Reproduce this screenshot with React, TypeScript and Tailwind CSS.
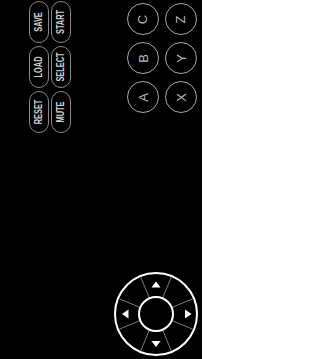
import React from 'react';

const pills = ['SAVE', 'START', 'LOAD', 'SELECT', 'RESET', 'MUTE'];
const keys = ['C', 'Z', 'B', 'Y', 'A', 'X'];

const Pill = ({ label }: { label: string }) => (
  <div className="w-[20px] h-[42px] rounded-full border border-[#8a8a8a] flex items-center justify-center">
    <span className="[transform:rotate(-90deg)_scaleX(0.74)] whitespace-nowrap text-[10px] leading-none font-bold text-[#d2d2d2] font-['Liberation_Sans',sans-serif]">
      {label}
    </span>
  </div>
);

const Key = ({ label }: { label: string }) => (
  <div className="w-[32px] h-[32px] rounded-full border-[1.5px] border-[#a8a8a8] flex items-center justify-center">
    <span className="[transform:rotate(-90deg)] text-[13px] leading-none text-[#b8b8b8] font-['Liberation_Sans',sans-serif]">
      {label}
    </span>
  </div>
);

const DPad = () => {
  const lines = Array.from({ length: 8 }, (_, i) => {
    const a = ((22.5 + 45 * i) * Math.PI) / 180;
    return {
      x1: 43 + 17 * Math.cos(a),
      y1: 43 + 17 * Math.sin(a),
      x2: 43 + 41 * Math.cos(a),
      y2: 43 + 41 * Math.sin(a),
    };
  });
  return (
    <svg width="86" height="86" viewBox="0 0 86 86">
      {lines.map((l, i) => (
        <line key={i} {...l} stroke="#7a7a7a" strokeWidth="1" />
      ))}
      <circle cx="43" cy="43" r="41" fill="none" stroke="#fff" strokeWidth="2" />
      <circle cx="43" cy="43" r="17" fill="none" stroke="#fff" strokeWidth="2" />
      <polygon points="43,10.5 38.5,16.5 47.5,16.5" fill="#fff" />
      <polygon points="43,76 38.5,70 47.5,70" fill="#fff" />
      <polygon points="9,43 15.5,38.5 15.5,47.5" fill="#fff" />
      <polygon points="78.5,43 72,38.5 72,47.5" fill="#fff" />
    </svg>
  );
};

export default function App() {
  return (
    <div className="w-[202px] h-[359px] bg-black flex flex-col justify-between overflow-hidden">
      <div className="flex items-start">
        {/* system buttons */}
        <div className="ml-[29px] mt-[1px] grid grid-cols-2 gap-x-[2px] gap-y-[3px]">
          {pills.map((p) => (
            <Pill key={p} label={p} />
          ))}
        </div>

        {/* face buttons */}
        <div className="ml-auto mr-[5px] mt-[3px] grid grid-cols-2 gap-x-[6px] gap-y-[7px]">
          {keys.map((k) => (
            <Key key={k} label={k} />
          ))}
        </div>
      </div>

      {/* d-pad */}
      <div className="flex justify-end pr-[3px] pb-[2px]">
        <DPad />
      </div>
    </div>
  );
}
